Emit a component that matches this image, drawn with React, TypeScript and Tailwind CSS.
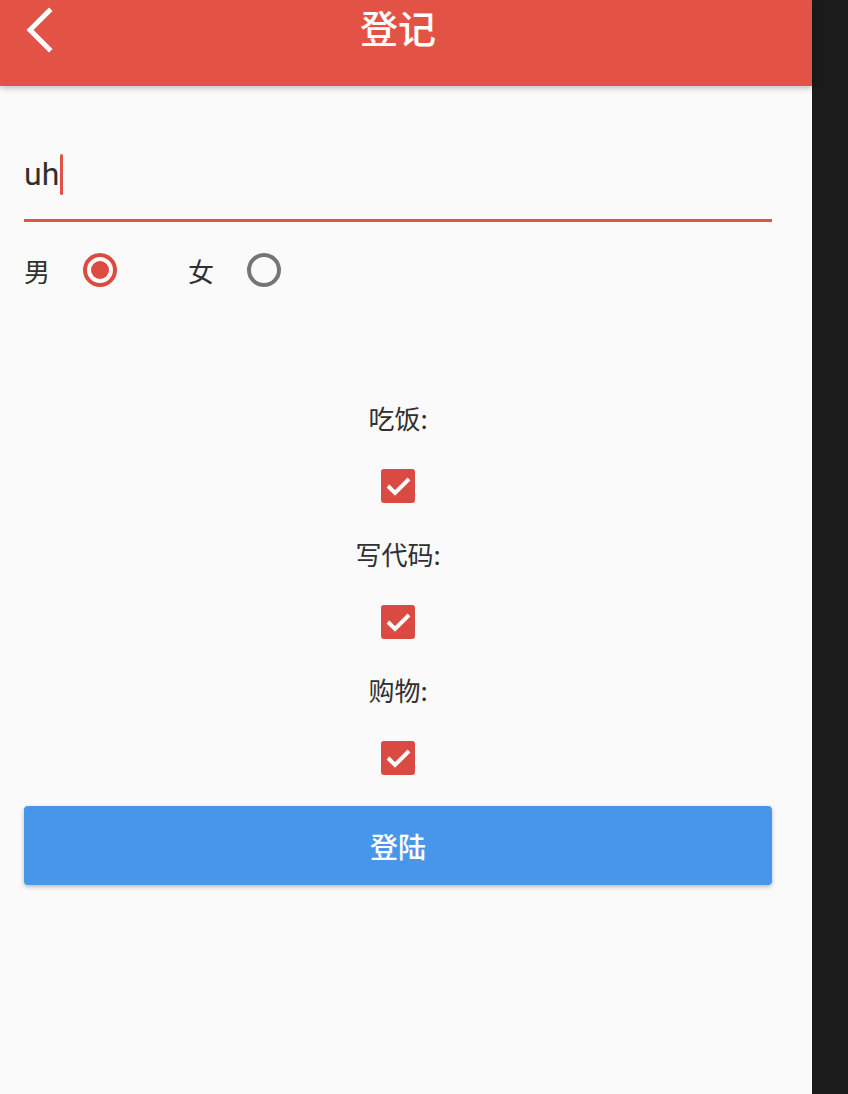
/**
 * Register form screen
 */

const font = { fontFamily: '"Noto Sans CJK SC", Roboto, sans-serif' };

function BackArrow() {
  return (
    <svg width="36" height="48" viewBox="0 0 36 48" className="text-white">
      <path d="M27 6 L8 25 L27 44" fill="none" stroke="currentColor" strokeWidth="5" strokeLinecap="square" />
    </svg>
  );
}

function Radio({ checked }: { checked: boolean }) {
  return (
    <div
      className={`w-[34px] h-[34px] rounded-full border-[4px] flex items-center justify-center ${
        checked ? 'border-[#dc4b3f]' : 'border-[#757575]'
      }`}
    >
      {checked && <div className="w-[18px] h-[18px] rounded-full bg-[#dc4b3f]" />}
    </div>
  );
}

function Check() {
  return (
    <div className="w-[34px] h-[34px] rounded-[3px] bg-[#d94b40]">
      <svg width="34" height="34" viewBox="0 0 34 34">
        <path d="M7 17 L14 24 L28 10" fill="none" stroke="white" strokeWidth="4" />
      </svg>
    </div>
  );
}

const hobbies = ['吃饭:', '写代码:', '购物:'];

export default function App() {
  return (
    <div className="flex min-h-[1094px] bg-[#1b1b1b]" style={font}>
      <div className="w-[812px] bg-[#fafafa] flex flex-col">
        {/* App bar */}
        <header className="h-[86px] bg-[#e35345] pr-[16px] shadow-[0_2px_6px_rgba(0,0,0,0.25)] relative z-10">
          <div className="grid grid-cols-[72px_1fr_72px] items-start pt-[5px]">
            <div className="pl-[22px]">
              <BackArrow />
            </div>
            <h1 className="text-center text-white text-[38px] leading-[44px] font-medium">登记</h1>
            <div />
          </div>
        </header>

        {/* Main content */}
        <main className="pl-[24px] pr-[40px]">
          <div className="pt-[64px] pb-[21px] border-b-[3px] border-[#e35345] flex items-center">
            <span className="text-[32px] leading-[48px] text-[#303030]" style={{ fontFamily: 'Roboto, "Noto Sans CJK SC", sans-serif' }}>
              uh
            </span>
            <span className="w-[3px] h-[41px] rounded-full bg-[#e35345] ml-[1px]" />
          </div>

          <div className="mt-[26px] h-[44px] flex items-center text-[26px] text-[#303030]">
            <span>男</span>
            <div className="ml-[33px]">
              <Radio checked />
            </div>
            <span className="ml-[71px]">女</span>
            <div className="ml-[33px]">
              <Radio checked={false} />
            </div>
          </div>

          <div className="mt-[108px] flex flex-col items-center">
            {hobbies.map((h, i) => (
              <div key={h} className={`flex flex-col items-center ${i > 0 ? 'mt-[33px]' : ''}`}>
                <div className="text-[26px] leading-[36px] text-[#303030]">{h}</div>
                <div className="mt-[33px]">
                  <Check />
                </div>
              </div>
            ))}
          </div>

          <button className="mt-[31px] w-full h-[79px] rounded-[4px] bg-[#4896ea] text-white text-[28px] font-medium shadow-[0_2px_4px_rgba(0,0,0,0.25)]">
            登陆
          </button>
        </main>
      </div>
      <div className="flex-1" />
    </div>
  );
}
